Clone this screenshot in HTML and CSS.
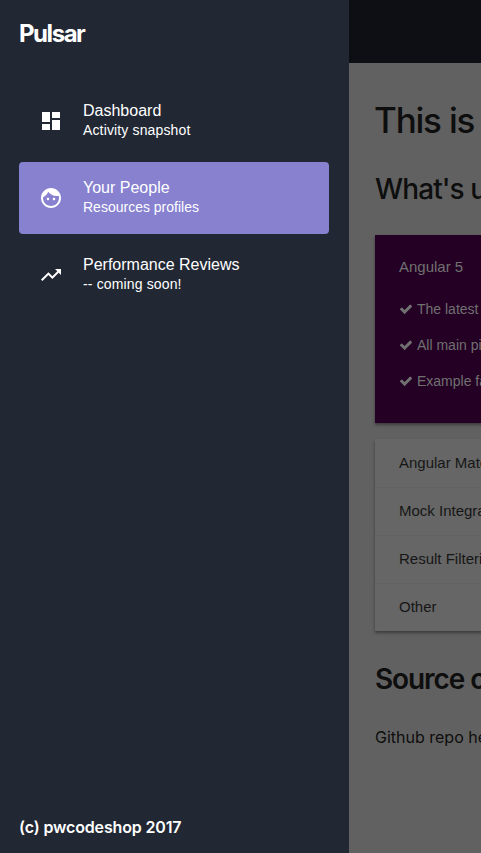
FILE: index.html
```html
<!DOCTYPE html>
<html lang="en">
<head>
<meta charset="utf-8">
<title>Pulsar</title>
<link rel="stylesheet" href="styles.css">
</head>
<body>
<svg class="defs" width="0" height="0">
  <symbol id="check" viewBox="0 0 1792 1792"><path d="M1671 566q0 40-28 68l-724 724-136 136q-28 28-68 28t-68-28l-136-136-362-362q-28-28-28-68t28-68l136-136q28-28 68-28t68 28l294 295 656-657q28-28 68-28t68 28l136 136q28 28 28 68z"/></symbol>
</svg>
<div class="app">
  <aside class="sidebar">
    <h2 class="brand">Pulsar</h2>
    <nav class="nav">
      <a class="nav-item">
        <svg class="icon" viewBox="0 0 24 24"><path d="M3 13h8V3H3v10zm0 8h8v-6H3v6zm10 0h8V11h-8v10zm0-18v6h8V3h-8z"/></svg>
        <span class="label"><span class="title">Dashboard</span><span class="sub wide">Activity snapshot</span></span>
      </a>
      <a class="nav-item active">
        <svg class="icon" viewBox="0 0 24 24"><path d="M9 11.75c-.69 0-1.25.56-1.25 1.25s.56 1.25 1.25 1.25 1.25-.56 1.25-1.25-.56-1.25-1.25-1.25zm6 0c-.69 0-1.25.56-1.25 1.25s.56 1.25 1.25 1.25 1.25-.56 1.25-1.25-.56-1.25-1.25-1.25zM12 2C6.48 2 2 6.48 2 12s4.480 10 10 10 10-4.480 10-10S17.520 2 12 2zm0 18c-4.410 0-8-3.590-8-8 0-.29.020-.58.050-.86 2.360-1.050 4.230-2.980 5.210-5.370C11.070 8.330 14.050 10 17.420 10c.78 0 1.530-.09 2.250-.26.21.71.33 1.470.33 2.260 0 4.410-3.590 8-8 8z"/></svg>
        <span class="label"><span class="title">Your People</span><span class="sub">Resources profiles</span></span>
      </a>
      <a class="nav-item">
        <svg class="icon" viewBox="0 0 24 24"><path d="M16 6l2.290 2.290-4.880 4.880-4-4L2 16.590 3.410 18l6-6 4 4 6.300-6.290L22 12V6z"/></svg>
        <span class="label"><span class="title">Performance Reviews</span><span class="sub wide">-- coming soon!</span></span>
      </a>
    </nav>
    <footer class="copyright">(c) pwcodeshop 2017</footer>
  </aside>
  <div class="page">
    <header class="topbar"></header>
    <main class="content">
      <h1>This is</h1>
      <h2 class="section">What's u</h2>
      <section class="panel open">
        <div class="panel-title">Angular 5</div>
        <ul>
          <li><svg class="check"><use href="#check"/></svg>The latest</li>
          <li><svg class="check"><use href="#check"/></svg>All main pieces</li>
          <li><svg class="check"><use href="#check"/></svg>Example fa</li>
        </ul>
      </section>
      <section class="panel list">
        <div class="row">Angular Material</div>
        <div class="row">Mock Integration</div>
        <div class="row">Result Filtering</div>
        <div class="row">Other</div>
      </section>
      <h2 class="section source">Source c</h2>
      <p class="repo">Github repo here</p>
    </main>
  </div>
</div>
</body>
</html>
```
FILE: styles.css
```css
* { box-sizing: border-box; }
body { margin: 0; font-family: "Liberation Sans", sans-serif; }
h1, h2, p, ul { margin: 0; padding: 0; }
.defs { display: block; }
.app { display: flex; height: 853px; overflow: hidden; }
.sidebar {
  width: 349px; flex: none; padding: 20px 20px 16px 19px;
  background: #222734; color: #fff;
  display: flex; flex-direction: column;
}
.brand { font: 700 24px/28px Inter, sans-serif; letter-spacing: -1.45px; }
.nav { margin-top: 37px; display: flex; flex-direction: column; gap: 5px; }
.nav-item { display: flex; align-items: center; height: 72px; padding: 0 20px; border-radius: 4px; }
.active { background: #8781d0; }
.icon { width: 24px; height: 24px; margin-right: 20px; fill: #fff; }
.label { display: flex; flex-direction: column; margin-top: -2px; }
.title { font-size: 16px; line-height: 20px; }
.sub { font-size: 14px; line-height: 18px; }
.wide { letter-spacing: .14px; }
.copyright { margin-top: auto; font: 600 16px/20px Inter, sans-serif; letter-spacing: -0.15px; }
.page { flex: 1; min-width: 0; overflow: hidden; background: #616161; color: #0e0e0e; }
.topbar { height: 63px; background: #0d0f14; }
.content { width: 500px; padding: 36px 26px; }
h1 { font: 500 35px/42px Inter, sans-serif; letter-spacing: -1.2px; margin-left: -1px; }
.section { margin-top: 30px; font: 500 28px/36px Inter, sans-serif; letter-spacing: -0.9px; }
.panel { box-shadow: 0 2px 3px rgba(0, 0, 0, .4); }
.open { margin-top: 28px; height: 188px; padding: 8px 24px; background: #240024; color: #707070; }
.panel-title { font-size: 15px; line-height: 48px; }
ul { list-style: none; }
li { display: flex; align-items: center; height: 36px; font-size: 14px; white-space: nowrap; }
.check { width: 14px; height: 14px; margin-right: 4px; fill: #707070; }
.list { margin-top: 16px; background: #666; color: #161616; }
.row { height: 48px; padding-left: 24px; font-size: 15px; line-height: 48px; }
.row + .row { box-shadow: inset 0 1px #626262; }
.source { margin-top: 30px; font-weight: 600; letter-spacing: -1.1px; }
.repo { margin-top: 28px; font: 400 16px/24px Inter, sans-serif; }
```
